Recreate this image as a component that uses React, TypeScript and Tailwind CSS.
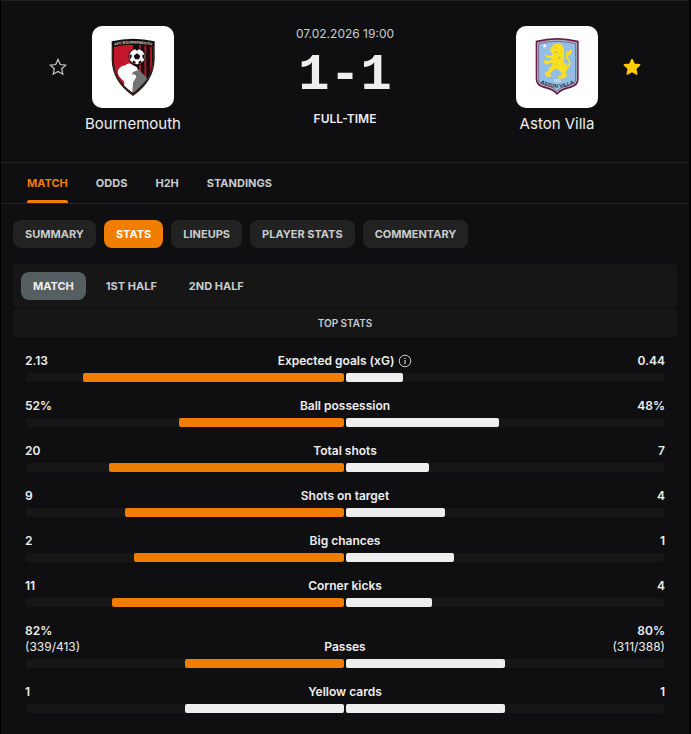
import React, { useState } from "react";

interface StatType {
  label: string;
  home: string;
  away: string;
  homeDetail?: string;
  awayDetail?: string;
  homeShare: number;
  awayShare: number;
  homeLeads: boolean;
  info?: boolean;
}

const MAIN_TABS = ["MATCH", "ODDS", "H2H", "STANDINGS"];
const SUB_TABS = ["SUMMARY", "STATS", "LINEUPS", "PLAYER STATS", "COMMENTARY"];
const PERIODS = ["MATCH", "1ST HALF", "2ND HALF"];

const STATS: StatType[] = [
  { label: "Expected goals (xG)", home: "2.13", away: "0.44", homeShare: 82, awayShare: 18, homeLeads: true, info: true },
  { label: "Ball possession", home: "52%", away: "48%", homeShare: 52, awayShare: 48, homeLeads: true },
  { label: "Total shots", home: "20", away: "7", homeShare: 74, awayShare: 26, homeLeads: true },
  { label: "Shots on target", home: "9", away: "4", homeShare: 69, awayShare: 31, homeLeads: true },
  { label: "Big chances", home: "2", away: "1", homeShare: 66, awayShare: 34, homeLeads: true },
  { label: "Corner kicks", home: "11", away: "4", homeShare: 73, awayShare: 27, homeLeads: true },
  {
    label: "Passes",
    home: "82%",
    away: "80%",
    homeDetail: "(339/413)",
    awayDetail: "(311/388)",
    homeShare: 50,
    awayShare: 50,
    homeLeads: true,
  },
  { label: "Yellow cards", home: "1", away: "1", homeShare: 50, awayShare: 50, homeLeads: false },
];

const BournemouthCrest: React.FC = () => (
  <svg viewBox="-24 -12 246 246" className="size-full" aria-hidden="true">
    <defs>
      <clipPath id="afcb-inner">
        <path d="M42 51 Q99 37 157 51 V92 Q155 150 99 189 Q43 150 42 92Z" />
      </clipPath>
      <pattern id="afcb-lines" width="3" height="3" patternUnits="userSpaceOnUse" patternTransform="rotate(35)">
        <rect width="3" height="3" fill="#b4b4b4" />
        <rect width="3" height="1.5" fill="#333" />
      </pattern>
      <path id="afcb-arc" d="M41 47 Q99 34 158 47" />
    </defs>
    <path d="M35 34 Q99 19 164 34 V88 Q162 155 99 198 Q36 155 35 88Z" fill="#17110f" />
    <path d="M38 50 V88 Q40 153 99 194 Q159 153 161 88 V50" fill="none" stroke="#8d6d63" strokeWidth="1" />
    <g clipPath="url(#afcb-inner)">
      <path d="M40 36 H99 V190 H40Z" fill="#c21728" />
      <path d="M99 36 H160 V190 H99Z" fill="#160d0e" />
      <path d="M117 40h6v110h-6z M133 40h6v100h-6z M150 40h7v90h-7z" fill="#a91626" />
      <path d="M109 112 L144 147 L101 190 L88 170 L92 142Z" fill="url(#afcb-lines)" />
      <path
        d="M54 121 Q61 108 76 106 Q82 98 91 101 L111 112 L113 121 Q98 124 96 133 Q107 132 109 141 L99 157 L97 188 L72 168 Q76 155 65 148 L57 139 Q51 130 54 121Z"
        fill="#fff"
      />
    </g>
    <circle cx="111" cy="80" r="26" fill="#130d0e" />
    <circle cx="111" cy="80" r="23" fill="#fff" />
    <path
      d="M111 70 L121 77 L117 88 H105 L101 77Z M105 57h12l-6 6z M88 76l7-3v9l-5 6z M134 76l-7-3v9l5 6z M97 99l2-8 8 5-1 6z M125 99l-2-8-8 5 1 6z"
      fill="#15100f"
    />
    <text fontFamily="Liberation Sans" fontWeight="700" fontSize="11" fill="#e1d5d0" textAnchor="middle">
      <textPath href="#afcb-arc" startOffset="50%">AFC BOURNEMOUTH</textPath>
    </text>
  </svg>
);

const AstonVillaCrest: React.FC = () => (
  <svg viewBox="-24 -12 246 246" className="size-full" aria-hidden="true">
    <defs>
      <path id="avfc-arc" d="M46 158 Q99 189 153 158" />
    </defs>
    <path d="M35 32 Q99 16 164 32 V148 Q164 167 140 174 Q111 180 99 195 Q88 180 59 174 Q35 167 35 148Z" fill="#651e40" />
    <path
      d="M41 38 Q99 23 158 38 V147 Q158 163 137 168 Q110 174 99 187 Q89 174 62 168 Q41 163 41 147Z"
      fill="#94bee5"
      stroke="#d0dff1"
      strokeWidth="2"
    />
    <path
      d="M44 41 Q99 27 155 41 V146 Q155 161 135 165 Q109 171 99 183 Q90 171 64 165 Q44 161 44 146Z"
      fill="none"
      stroke="#73395c"
      strokeWidth="2"
    />
    {/* rampant lion */}
    <path
      d="M84 50 L90 42 L98 43 L104 40 L113 44 L118 52 L121 62 L119 74 L121 86 L119 96 L127 103 L131 114 L127 125 L123 130 L130 135 L126 142 L117 146 L101 145 L103 139 L113 134 L111 127 L104 119 L96 116 L88 119 L84 126 L77 130 L82 137 L77 142 L66 138 L61 130 L66 125 L73 123 L76 113 L84 106 L86 99 L78 98 L72 104 L64 102 L58 95 L61 89 L67 93 L78 91 L84 88 L78 83 L70 85 L64 79 L66 73 L72 77 L80 77 L86 74 L85 69 L77 65 L81 59 L79 55Z"
      fill="#f8df20"
    />
    <path
      d="M127 108 Q139 103 133 94 L126 85 Q121 78 127 71 L126 63 L132 65 L139 58 L145 60 L142 70 L137 76 L131 77 Q130 82 135 88 Q145 100 134 113Z"
      fill="#f8df20"
    />
    <path d="M90 52l6 1-4 3z M99 62l-8 6 10 1z M107 79l-6 8 9-3z" fill="#a5b761" />
    <path d="M62 41l2 4 4 1-3 3 1 4-4-2-4 2 1-4-3-3 4-1z" fill="#fff" />
    <text x="99" y="157" fontFamily="Liberation Sans" fontWeight="700" fontSize="9" fill="#e3eef9" textAnchor="middle">
      1874
    </text>
    <text fontFamily="Liberation Sans" fontWeight="700" fontSize="16" fill="#2b2552" textAnchor="middle">
      <textPath href="#avfc-arc" startOffset="50%">ASTON VILLA</textPath>
    </text>
  </svg>
);

const FavouriteButton: React.FC<{ team: string; initial: boolean }> = ({ team, initial }) => {
  const [active, setActive] = useState(initial);

  return (
    <button
      type="button"
      aria-label={`Favourite ${team}`}
      aria-pressed={active}
      onClick={() => setActive(!active)}
      className="mt-8 size-[18px] shrink-0"
    >
      {active ? (
        <svg viewBox="0 0 18 18" className="size-full" fill="#ffcd00" stroke="#ffcd00" strokeWidth="1.6" strokeLinejoin="round">
          <path d="M9 1.5 L11.2 6.3 L16.6 6.9 L12.6 10.6 L13.7 16 L9 13.3 L4.3 16 L5.4 10.6 L1.4 6.9 L6.8 6.3Z" />
        </svg>
      ) : (
        <svg viewBox="0 0 18 18" className="size-full" fill="none" stroke="#c8cdcd" strokeWidth="1.2" strokeLinejoin="miter">
          <path d="M9 1.4 L11.3 6.5 L16.8 7.1 L12.7 10.8 L13.8 16.2 L9 13.5 L4.2 16.2 L5.3 10.8 L1.2 7.1 L6.7 6.5Z" />
        </svg>
      )}
    </button>
  );
};

const Team: React.FC<{ name: string; children: React.ReactNode }> = ({ name, children }) => (
  <div className="flex w-24 flex-col items-center">
    <div className="size-[82px] overflow-hidden rounded-[10px] bg-white">{children}</div>
    <a href="#team" className="mt-1 text-[15px] leading-6 whitespace-nowrap text-[#eeeeee]">
      {name}
    </a>
  </div>
);

const StatRow: React.FC<{ stat: StatType }> = ({ stat }) => (
  <li>
    <div className="flex items-end justify-between text-[12px] leading-4 font-semibold">
      <div className="w-24">
        <div>{stat.home}</div>
        {stat.homeDetail && <div className="font-normal">{stat.homeDetail}</div>}
      </div>
      <div className="flex items-center gap-1">
        <span>{stat.label}</span>
        {stat.info && (
          <svg viewBox="0 0 14 14" className="size-3.5" fill="none" stroke="#c8cdcd" role="img" aria-label="Info">
            <circle cx="7" cy="7" r="5.8" strokeWidth="1" />
            <path d="M7 6v4.2M7 3.8v1.2" strokeWidth="1.2" />
          </svg>
        )}
      </div>
      <div className="w-24 text-right">
        <div>{stat.away}</div>
        {stat.awayDetail && <div className="font-normal">{stat.awayDetail}</div>}
      </div>
    </div>
    <div className="mx-px mt-1 grid h-[9px] grid-cols-2 gap-0.5">
      <div className="flex justify-end rounded-xs bg-[#161617]">
        <div
          className={stat.homeLeads ? "rounded-xs bg-[#f07c00]" : "rounded-xs bg-[#eeeeee]"}
          style={{ width: `${stat.homeShare}%` }}
        />
      </div>
      <div className="flex rounded-xs bg-[#161617]">
        <div className="rounded-xs bg-[#eeeeee]" style={{ width: `${stat.awayShare}%` }} />
      </div>
    </div>
  </li>
);

const App: React.FC = () => {
  const [mainTab, setMainTab] = useState("MATCH");
  const [subTab, setSubTab] = useState("STATS");
  const [period, setPeriod] = useState("MATCH");

  return (
    <div className="min-h-screen bg-black pr-0.5 pl-px font-['Inter','Liberation_Sans',sans-serif] text-[#eeeeee]">
      <main className="min-h-screen border-t border-[#222223] bg-[#0f0f11] pb-5">
        {/* Match header */}
        <header className="grid grid-cols-3 border-b border-[#222223] px-[26px] pt-[25px] pb-[26px]">
          <div className="flex justify-center gap-[18px]">
            <FavouriteButton team="Bournemouth" initial={false} />
            <Team name="Bournemouth">
              <BournemouthCrest />
            </Team>
            <div className="w-[18px]" />
          </div>
          <div className="flex flex-col items-center">
            <div className="text-[12px] leading-4 text-[#c8cdcd]">07.02.2026 19:00</div>
            <div className="mt-1 font-['Liberation_Mono',monospace] text-[52px] leading-[60px] font-bold">1-1</div>
            <div className="mt-[5px] text-[12px] leading-4 font-semibold">FULL-TIME</div>
          </div>
          <div className="flex justify-center gap-[18px]">
            <div className="w-[18px]" />
            <Team name="Aston Villa">
              <AstonVillaCrest />
            </Team>
            <FavouriteButton team="Aston Villa" initial={true} />
          </div>
        </header>

        {/* Main tabs */}
        <nav className="flex gap-7 border-b border-[#222223] px-[26px] text-[11px] font-bold">
          {MAIN_TABS.map((tab) => (
            <button
              key={tab}
              type="button"
              onClick={() => setMainTab(tab)}
              className={
                tab === mainTab
                  ? "relative h-10 text-[#f07c00] after:absolute after:inset-x-0 after:bottom-0 after:h-[3px] after:rounded-t-xs after:bg-[#f07c00]"
                  : "h-10 text-[#c8cdcd]"
              }
            >
              {tab}
            </button>
          ))}
        </nav>

        <div className="px-3 pt-4">
          <nav className="flex flex-wrap gap-2 text-[11px] font-bold">
            {SUB_TABS.map((tab) => (
              <button
                key={tab}
                type="button"
                onClick={() => setSubTab(tab)}
                className={
                  tab === subTab
                    ? "h-7 rounded-lg bg-[#f07c00] px-3 text-white"
                    : "h-7 rounded-lg bg-[#222223] px-3 text-[#c8cdcd]"
                }
              >
                {tab}
              </button>
            ))}
          </nav>

          {/* Period filter */}
          <div className="mt-4 flex gap-2 rounded-sm bg-[#161617] p-2 text-[11px] font-bold">
            {PERIODS.map((item) => (
              <button
                key={item}
                type="button"
                onClick={() => setPeriod(item)}
                className={item === period ? "h-7 rounded-lg bg-[#555e61] px-3 text-[#eeeeee]" : "h-7 rounded-lg px-3 text-[#c8cdcd]"}
              >
                {item}
              </button>
            ))}
          </div>

          <section>
            <h2 className="mt-px rounded-sm bg-[#161617] text-center text-[10px] leading-7 font-semibold text-[#c8cdcd]">
              TOP STATS
            </h2>
            <ul className="mt-4 space-y-4 px-3">
              {STATS.map((stat) => (
                <StatRow key={stat.label} stat={stat} />
              ))}
            </ul>
          </section>
        </div>
      </main>
    </div>
  );
};

export default App;
